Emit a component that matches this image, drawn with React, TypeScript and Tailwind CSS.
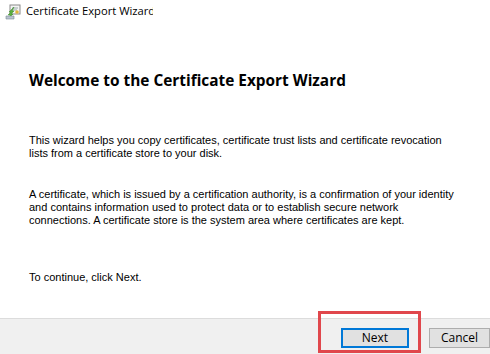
import React from "react";

function CertIcon() {
  return (
    <svg width="16" height="16" viewBox="0 0 16 16">
      <rect x="5" y="1" width="10" height="9" fill="#f4f4f4" stroke="#8a8a8a" strokeWidth="1" />
      <line x1="7" y1="4" x2="13" y2="4" stroke="#9aa" strokeWidth="1" />
      <line x1="7" y1="6" x2="12" y2="6" stroke="#9aa" strokeWidth="1" />
      <circle cx="12" cy="8" r="1.8" fill="#e2b53a" />
      <path d="M9 3 L4 8 L6 8 L3 11 L5 11 L5 13 L8 10 L6 10 L9 7 L7 7 Z" fill="#5ab33c" stroke="#3a8a2a" strokeWidth="0.5" />
      <path d="M1 12 L9 12 L9 15 L1 15 Z" fill="#b9c4cf" stroke="#7a8a99" strokeWidth="0.6" />
    </svg>
  );
}

export default function App() {
  return (
    <div className="w-[490px] h-[354px] bg-white flex flex-col overflow-hidden">
      <div className="flex items-center h-[22px] pl-[5px] pt-[1px]">
        <CertIcon />
        <div className="ml-[5px] w-[127px] overflow-hidden whitespace-nowrap text-[11.2px] text-black font-['Open_Sans',sans-serif]">
          Certificate Export Wizard
        </div>
      </div>
      <div className="flex-1 flex flex-col pl-[29px] text-black font-['Liberation_Sans',Arial,sans-serif]">
        <h1 className="mt-[49px] text-[15.4px] font-bold leading-[20px] text-black font-['Open_Sans',sans-serif]">
          Welcome to the Certificate Export Wizard
        </h1>
        <p className="mt-[43px] text-[11px] leading-[13px] w-[440px]">
          This wizard helps you copy certificates, certificate trust lists and certificate revocation
          <br />
          lists from a certificate store to your disk.
        </p>
        <p className="mt-[28px] text-[11px] leading-[13px] w-[460px]">
          A certificate, which is issued by a certification authority, is a confirmation of your identity
          <br />
          and contains information used to protect data or to establish secure network
          <br />
          connections. A certificate store is the system area where certificates are kept.
        </p>
        <p className="mt-[44px] text-[11px] leading-[13px]">To continue, click Next.</p>
      </div>
      <div className="h-[36px] bg-[#f0f0f0] border-t border-[#dcdcdc] flex items-start pt-[9px] pl-[341px] gap-[20px] relative font-['Open_Sans',sans-serif]">
        <div className="absolute left-[318px] top-[-8px] w-[103px] h-[42px] border-[3px] border-[#e0474c]" />
        <button className="w-[69px] h-[20px] bg-[#e1e1e1] border-2 border-[#0078d7] text-[12px] text-black flex items-center justify-center">
          Next
        </button>
        <button className="w-[62px] h-[20px] bg-[#e1e1e1] border border-[#adadad] text-[12px] text-black flex items-center justify-center">
          Cancel
        </button>
      </div>
    </div>
  );
}
